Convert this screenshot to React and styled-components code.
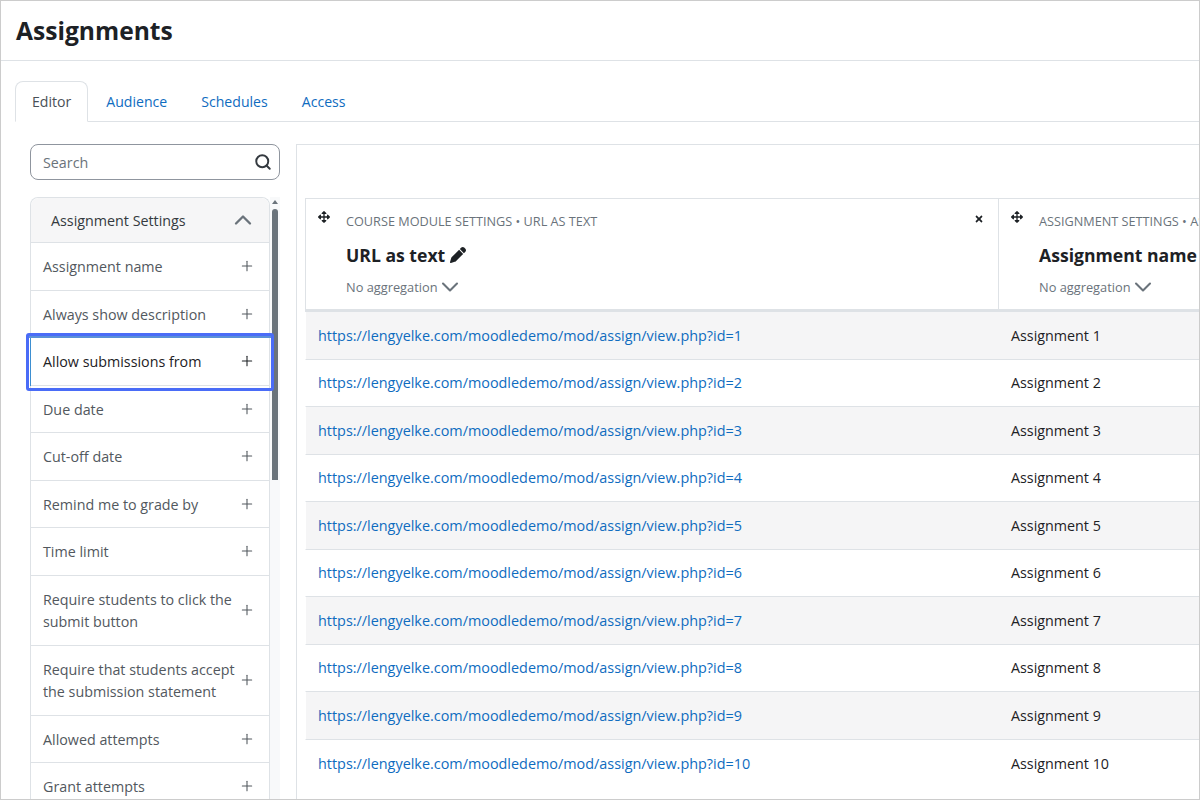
import React from 'react';
import styled, { createGlobalStyle } from 'styled-components';
import { FaArrowsAlt, FaTimes } from 'react-icons/fa';
import { FaPen } from 'react-icons/fa6';
import { ChevronDown, ChevronUp, Plus, Search } from 'lucide-react';

const GlobalStyle = createGlobalStyle`
  html, body {
    margin: 0;
    padding: 0;
    background: #fff;
    overflow: hidden;
  }
  * {
    box-sizing: border-box;
  }
  body {
    font-family: "Open Sans", "Noto Sans", sans-serif;
    font-size: 14.3px;
    color: #1d2125;
  }
`;

const Frame = styled.div`
  width: 1200px;
  height: 800px;
  border: 1px solid #ccc;
  overflow: hidden;
  display: flex;
  flex-direction: column;
`;

const Header = styled.header`
  height: 60px;
  flex: none;
  display: flex;
  align-items: center;
  padding: 0 15px;
  border-bottom: 1px solid #dee2e6;
`;

const Title = styled.h1`
  margin: 0;
  font-size: 24.6px;
  font-weight: 700;
  color: #1d2125;
`;

const Tabs = styled.nav`
  flex: none;
  display: flex;
  margin: 20px 0 0 14px;
  height: 41px;
  border-bottom: 1px solid #dee2e6;
`;

const Tab = styled.a`
  height: ${p => (p.$active ? '41px' : '40px')};
  padding: 0 16px;
  margin-right: ${p => (p.$active ? '1px' : '0')};
  display: flex;
  align-items: center;
  font-size: 14.1px;
  color: ${p => (p.$active ? '#495057' : '#0f6cbf')};
  background: #fff;
  border: 1px solid ${p => (p.$active ? '#dee2e6' : 'transparent')};
  border-bottom-color: ${p => (p.$active ? '#fff' : 'transparent')};
  border-radius: 8px 8px 0 0;
`;

const Content = styled.main`
  flex: 1;
  min-height: 0;
  display: flex;
  padding: 22px 0 0 29px;
  gap: 16px;
`;

const Sidebar = styled.aside`
  width: 250px;
  flex: none;
  display: flex;
  flex-direction: column;
  gap: 17px;
`;

const SearchBox = styled.div`
  height: 36px;
  flex: none;
  display: flex;
  align-items: center;
  justify-content: space-between;
  padding: 0 7px 0 12px;
  border: 1px solid #8f959e;
  border-radius: 8px;
  color: #6a737b;
  svg {
    color: #343a40;
  }
`;

const ListWrap = styled.div`
  flex: 1;
  min-height: 0;
  display: flex;
`;

const List = styled.div`
  width: 240px;
  flex: none;
  border: 1px solid #dee2e6;
  border-bottom: none;
  border-radius: 8px 8px 0 0;
`;

const ListHead = styled.div`
  height: 45px;
  display: flex;
  align-items: center;
  justify-content: space-between;
  padding: 0 12px 0 20px;
  background: #f6f6f7;
  border-bottom: 1px solid #dee2e6;
  color: #343a40;
  border-radius: 8px 8px 0 0;
`;

const ListItem = styled.div`
  position: relative;
  min-height: ${p => (p.$tall ? '70px' : '0')};
  display: flex;
  align-items: center;
  justify-content: space-between;
  padding: 13.25px 14px 11.25px 12px;
  line-height: 22px;
  border-bottom: 1px solid #dee2e6;
  color: ${p => (p.$focused ? '#1d2125' : '#52585e')};
  svg {
    flex: none;
    margin-bottom: 2px;
    color: ${p => (p.$focused ? '#1d2125' : '#52585e')};
  }
  ${p => p.$focused && `
    &::before {
      content: '';
      position: absolute;
      left: -1px;
      top: -2px;
      bottom: -1px;
      width: 1px;
      background: #3d8fd1;
    }
    &::after {
      content: '';
      position: absolute;
      z-index: 1;
      inset: -5px -5px -6px -5px;
      border: 3px solid #4a6cf7;
      border-radius: 3px;
      box-shadow: inset 0 2px 0 #5a90d8;
    }
  `}
`;

const Scrollbar = styled.div`
  width: 10px;
  flex: none;
  display: flex;
  flex-direction: column;
  align-items: center;
  gap: 5px;
  padding-top: 3px;
  background: #f8f9fa;
`;

const ScrollArrow = styled.div`
  width: 0;
  height: 0;
  border-left: 3px solid transparent;
  border-right: 3px solid transparent;
  border-bottom: 4px solid #6a737b;
`;

const ScrollThumb = styled.div`
  width: 6px;
  height: 271px;
  background: #6a737b;
  border-radius: 3px 3px 0 0;
`;

const Panel = styled.section`
  flex: 1;
  min-width: 0;
  border: 1px solid #dee2e6;
  border-right: none;
  border-bottom: none;
  padding: 53px 0 0 8px;
  overflow: hidden;
`;

const Table = styled.table`
  width: 1101px;
  table-layout: fixed;
  border-collapse: separate;
  border-spacing: 0;
`;

const Th = styled.th`
  position: relative;
  height: 114px;
  padding: 13px 12px 0 40px;
  vertical-align: top;
  text-align: left;
  font-weight: 400;
  border-top: 1px solid #dee2e6;
  border-bottom: 3px solid #dee2e6;
  border-left: ${p => (p.$first ? '1px solid #dee2e6' : 'none')};
  border-right: 1px solid #dee2e6;
`;

const MoveHandle = styled.span`
  position: absolute;
  left: 12px;
  top: 12px;
  font-size: 12px;
  line-height: 1;
  color: #1d2125;
`;

const CloseButton = styled.span`
  position: absolute;
  right: 14px;
  top: 15px;
  font-size: 10px;
  line-height: 1;
  color: #1d2125;
`;

const Category = styled.div`
  font-size: 12.7px;
  line-height: 18px;
  color: #6a737b;
  text-transform: uppercase;
  white-space: nowrap;
`;

const ColName = styled.div`
  margin-top: 13px;
  display: flex;
  align-items: center;
  gap: 5px;
  font-size: 17.6px;
  line-height: 24px;
  font-weight: 700;
  color: #1d2125;
  white-space: nowrap;
  svg {
    font-size: 16px;
  }
`;

const Aggregation = styled.div`
  margin-top: 11px;
  display: flex;
  align-items: center;
  font-size: 12.8px;
  line-height: 18px;
  color: #6a737b;
  svg {
    margin: -5px 0 -5px -1px;
  }
`;

const Row = styled.tr`
  background: ${p => (p.$odd ? '#f5f5f6' : '#fff')};
`;

const Td = styled.td`
  height: 47.5px;
  padding: 0 12px;
  border-bottom: ${p => (p.$last ? 'none' : '1px solid #dee2e6')};
  border-left: ${p => (p.$first ? '1px solid #fff' : 'none')};
  white-space: nowrap;
  color: #1d2125;
`;

const Link = styled.a`
  font-size: 14.4px;
  color: #0f6cbf;
`;

const fields = [
  'Assignment name',
  'Always show description',
  'Allow submissions from',
  'Due date',
  'Cut-off date',
  'Remind me to grade by',
  'Time limit',
  'Require students to click the submit button',
  'Require that students accept the submission statement',
  'Allowed attempts',
  'Grant attempts',
];

const rows = Array.from({ length: 10 }, (_, i) => i + 1);

const App = () => (
  <>
    <GlobalStyle />
    <Frame>
      <Header>
        <Title>Assignments</Title>
      </Header>
      <Tabs>
        <Tab $active>Editor</Tab>
        <Tab>Audience</Tab>
        <Tab>Schedules</Tab>
        <Tab>Access</Tab>
      </Tabs>
      <Content>
        <Sidebar>
          <SearchBox>
            Search
            <Search size={18} strokeWidth={2.6} />
          </SearchBox>
          <ListWrap>
            <List>
              <ListHead>
                Assignment Settings
                <ChevronUp size={28} strokeWidth={2} color="#6a737b" />
              </ListHead>
              {fields.map(f => (
                <ListItem key={f} $tall={f.length > 30} $focused={f === 'Allow submissions from'}>
                  {f}
                  <Plus size={16} strokeWidth={1.6} />
                </ListItem>
              ))}
            </List>
            <Scrollbar>
              <ScrollArrow />
              <ScrollThumb />
            </Scrollbar>
          </ListWrap>
        </Sidebar>
        <Panel>
          <Table>
            <colgroup>
              <col style={{ width: 694 }} />
              <col style={{ width: 407 }} />
            </colgroup>
            <thead>
              <tr>
                <Th $first>
                  <MoveHandle><FaArrowsAlt /></MoveHandle>
                  <CloseButton><FaTimes /></CloseButton>
                  <Category>Course module settings • URL as text</Category>
                  <ColName>URL as text <FaPen /></ColName>
                  <Aggregation>No aggregation <ChevronDown size={28} strokeWidth={1.8} /></Aggregation>
                </Th>
                <Th>
                  <MoveHandle><FaArrowsAlt /></MoveHandle>
                  <Category>Assignment settings • Assignment name</Category>
                  <ColName>Assignment name <FaPen /></ColName>
                  <Aggregation>No aggregation <ChevronDown size={28} strokeWidth={1.8} /></Aggregation>
                </Th>
              </tr>
            </thead>
            <tbody>
              {rows.map(n => (
                <Row key={n} $odd={n % 2 === 1}>
                  <Td $first $last={n === 10}>
                    <Link>https://lengyelke.com/moodledemo/mod/assign/view.php?id={n}</Link>
                  </Td>
                  <Td $last={n === 10}>Assignment {n}</Td>
                </Row>
              ))}
            </tbody>
          </Table>
        </Panel>
      </Content>
    </Frame>
  </>
);

export default App;
